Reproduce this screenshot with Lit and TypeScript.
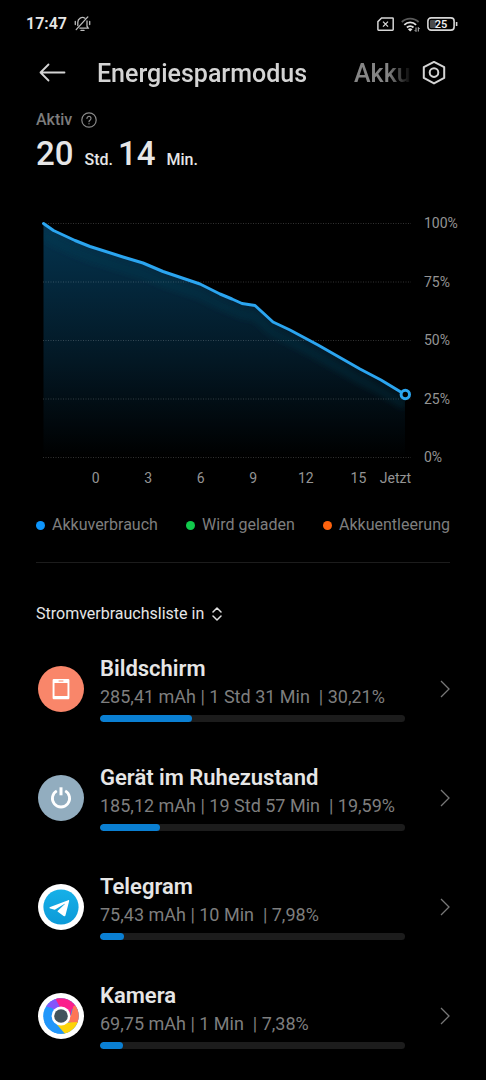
import { LitElement, html, css, svg, TemplateResult } from "lit";
import { customElement } from "lit/decorators.js";

interface Consumer {
  name: string;
  detail: string;
  percent: number;
  icon: TemplateResult;
}

const screenIcon = html`<svg class="app-icon" viewBox="0 0 46 46" aria-hidden="true">
  <circle cx="23" cy="23" r="23" fill="#f9866a" />
  <path
    fill="#fff"
    fill-rule="evenodd"
    d="M15.8 13h14.400a1.200 1.200 0 0 1 1.200 1.200v17.900a1.200 1.200 0 0 1-1.200 1.200H15.800a1.200 1.200 0 0 1-1.200-1.200V14.200a1.200 1.200 0 0 1 1.200-1.200zM16.500 17v13h13V17zM20.600 14.500v1h4.800v-1z"
  />
</svg>`;

const idleIcon = html`<svg class="app-icon" viewBox="0 0 46 46" aria-hidden="true">
  <circle cx="23" cy="23" r="23" fill="#92adbf" />
  <path d="M18.800 15.900a8.600 8.600 0 1 0 8.400 0" fill="none" stroke="#fff" stroke-width="2.800" />
  <path d="M23 12.300v8" stroke="#fff" stroke-width="3" />
</svg>`;

const telegramIcon = html`<svg class="app-icon" viewBox="0 0 46 46" aria-hidden="true">
  <defs>
    <linearGradient id="tg" x1="0" y1="0" x2="0" y2="1">
      <stop offset="0" stop-color="#16b0e8" />
      <stop offset="1" stop-color="#0c9ad8" />
    </linearGradient>
  </defs>
  <circle cx="23" cy="23" r="23" fill="#fff" />
  <circle cx="23" cy="23" r="17.6" fill="url(#tg)" />
  <path
    fill="#fff"
    d="M30.200 16.200 12.200 22.900c-1 .4-.9 1.200 0 1.500l4.600 1.400 9.400-5.900c.6-.3.9 0 .5.4l-6.900 6.400c-.4.4-.4.7 0 1l5.800 4.200c.9.6 1.700.300 1.900-.7l3.600-14c.2-.8-.2-1.300-.9-1z"
  />
</svg>`;

const cameraIcon = html`<svg class="app-icon" viewBox="0 0 46 46" aria-hidden="true">
  <defs>
    <clipPath id="lens"><circle cx="23" cy="23" r="17.800" /></clipPath>
  </defs>
  <circle cx="23" cy="23" r="23" fill="#fff" />
  <g clip-path="url(#lens)">
    <rect width="46" height="46" fill="#2196fa" />
    <path d="M23 23 14 15 6 13V0h14l6 14z" fill="#8455fb" />
    <path d="M23 16 17 5V0h29v12L34 16l-2 8z" fill="#fb1f8c" />
    <path d="M35.500 13 46 11v19l-12 0-6-2 5-6z" fill="#fd7657" />
    <path d="M42 29 30 29.500 17 30l9 13h12z" fill="#fdd408" />
    <path d="M15 27 28 42H14L4 30z" fill="#2196fa" />
  </g>
  <circle cx="23" cy="23" r="9.400" fill="#fff" />
  <circle cx="23" cy="23" r="6.800" fill="#42535c" />
</svg>`;

const consumers: Consumer[] = [
  { name: "Bildschirm", detail: "285,41 mAh | 1 Std 31 Min  | 30,21%", percent: 30.21, icon: screenIcon },
  { name: "Gerät im Ruhezustand", detail: "185,12 mAh | 19 Std 57 Min  | 19,59%", percent: 19.59, icon: idleIcon },
  { name: "Telegram", detail: "75,43 mAh | 10 Min  | 7,98%", percent: 7.98, icon: telegramIcon },
  { name: "Kamera", detail: "69,75 mAh | 1 Min  | 7,38%", percent: 7.38, icon: cameraIcon },
];

const curve =
  "0.500,0.500 10.500,7.500 32,17.500 47,23.500 80,34 100,40 120,48.500 157,61 177,71 189,76 199,80.500 212,82.500 230,99 247,107 275,122 317,146 338,157 357,168.500";

@customElement("power-chart")
export class PowerChart extends LitElement {
  static styles = css`
    :host {
      display: grid;
      grid-template-columns: minmax(0, 1fr) 34px;
      column-gap: 13px;
      row-gap: 13px;
      padding: 0 28px 0 43px;
      color: #949494;
      font-size: 14px;
      line-height: 16px;
    }
    .plot {
      display: block;
      width: 100%;
      overflow: visible;
    }
    .levels {
      display: flex;
      flex-direction: column;
      justify-content: space-between;
      margin: -8px 0;
    }
    .hours {
      display: grid;
      grid-template-columns: minmax(0, 1fr) repeat(6, minmax(0, 2fr)) minmax(0, 1fr);
      text-align: center;
    }
    .hours :first-child {
      grid-column: 2;
    }
    .now {
      justify-self: end;
    }
  `;

  render() {
    return html`
      <svg class="plot" viewBox="0 0 368 234" role="img" aria-label="Akkustand">
        <defs>
          <linearGradient id="area" x1="0" y1="0" x2="0" y2="234" gradientUnits="userSpaceOnUse">
            <stop offset="0" stop-color="#04344f" />
            <stop offset="0.25" stop-color="#04283d" />
            <stop offset="0.6" stop-color="#031723" />
            <stop offset="1" stop-color="#000" />
          </linearGradient>
          <clipPath id="under">
            <polygon points="${curve} 362,172 362,234 0.500,234" />
          </clipPath>
          <filter id="soft" x="-10%" y="-10%" width="120%" height="120%"><feGaussianBlur stdDeviation="3" /></filter>
        </defs>
        <polygon points="${curve} 362,172 362,234 0.500,234" fill="url(#area)" />
        <g clip-path="url(#under)">
          <polyline
            points="${curve} 362,172"
            transform="translate(0 11)"
            fill="none"
            stroke="#0a4458"
            stroke-opacity="0.28"
            stroke-width="8"
            filter="url(#soft)"
          />
        </g>
        ${[0.5, 59, 117.5, 176, 234.5].map(
          (y) => svg`<path d="M0 ${y}H368" stroke="#fff" stroke-opacity="0.2" stroke-dasharray="1 1.500" />`
        )}
        <polyline points="${curve}" fill="none" stroke="#2ba5f0" stroke-width="3" stroke-linejoin="round" stroke-linecap="round" />
        <circle cx="362.300" cy="171.500" r="4.200" fill="#000" stroke="#2ba5f0" stroke-width="3" />
      </svg>
      <div class="levels">
        ${["100%", "75%", "50%", "25%", "0%"].map((t) => html`<span>${t}</span>`)}
      </div>
      <div class="hours">
        ${["0", "3", "6", "9", "12", "15"].map((t) => html`<span>${t}</span>`)}
        <span class="now">Jetzt</span>
      </div>
    `;
  }
}

@customElement("app-root")
export class AppRoot extends LitElement {
  static styles = css`
    :host {
      display: block;
      min-height: 100vh;
      box-sizing: border-box;
      background: #000;
      color: #e6e6e6;
      font-family: Roboto, "Noto Sans", sans-serif;
      font-size: 16px;
      line-height: 20px;
    }
    button {
      padding: 0;
      border: 0;
      background: none;
      color: inherit;
      font: inherit;
      cursor: pointer;
    }
    svg {
      display: block;
      flex: none;
    }
    .status {
      display: flex;
      align-items: center;
      gap: 7px;
      height: 48px;
      padding: 0 28px 0 26px;
      font-weight: 600;
    }
    .spacer {
      flex: 1;
    }
    .header {
      display: flex;
      align-items: center;
      height: 50px;
      padding: 0 40px 0 38px;
      color: #d4d4d4;
    }
    .tabs {
      display: flex;
      flex: 1;
      min-width: 0;
      gap: 47px;
      margin: 0 10px 0 31px;
      padding-top: 2px;
      overflow: hidden;
      font-size: 25px;
      font-weight: 500;
      line-height: 32px;
      white-space: nowrap;
      -webkit-mask-image: linear-gradient(to left, transparent 0, #000 24px);
      mask-image: linear-gradient(to left, transparent 0, #000 24px);
    }
    .other {
      color: #858585;
    }
    .active {
      display: flex;
      align-items: center;
      gap: 9px;
      padding: 12px 36px 0;
      color: #7c7c7c;
      font-weight: 500;
    }
    .duration {
      display: flex;
      align-items: baseline;
      margin: 4px 36px 0;
      font-weight: 500;
    }
    .figure {
      font-size: 33px;
      line-height: 40px;
    }
    .unit {
      margin: 0 5px 0 11px;
    }
    power-chart {
      margin-top: 49px;
    }
    .legend {
      display: flex;
      justify-content: space-between;
      margin: 29px 36px 0;
      padding: 0 0 27px;
      border-bottom: 1px solid #1c1c1c;
      color: #7e7e7e;
      list-style: none;
    }
    .legend-item {
      display: flex;
      align-items: center;
      gap: 7px;
    }
    .dot {
      width: 9px;
      height: 9px;
      border-radius: 50%;
    }
    .blue {
      background: #0d95fc;
    }
    .green {
      background: #11ca4c;
    }
    .orange {
      background: #fd620e;
    }
    .sort {
      display: flex;
      align-items: center;
      gap: 8px;
      margin: 41px 36px 10px;
    }
    .list {
      margin: 0;
      padding: 0;
      list-style: none;
    }
    .row {
      display: flex;
      align-items: center;
      height: 109px;
      padding: 0 36px 0 38px;
      color: inherit;
      text-decoration: none;
    }
    .app-icon {
      width: 46px;
      height: 46px;
    }
    .info {
      display: flex;
      flex: 1;
      flex-direction: column;
      min-width: 0;
      margin: 0 35px 0 16px;
    }
    .name {
      font-size: 22px;
      font-weight: 600;
      line-height: 28px;
    }
    .detail {
      margin: 2px 0 6px;
      color: #7e7e7e;
      font-size: 18px;
      line-height: 24px;
      white-space: pre;
    }
    .bar {
      display: block;
      width: 100%;
      height: 7px;
      border: 0;
      border-radius: 4px;
      overflow: hidden;
      appearance: none;
      background: #1c1c1c;
    }
    .bar::-webkit-progress-bar {
      background: #1c1c1c;
    }
    .bar::-webkit-progress-value {
      border-radius: 4px;
      background: #0a7fd2;
    }
  `;

  render() {
    return html`
      <div class="status">
        <span>17:47</span>
        <svg width="17" height="16" viewBox="0 0 17 16" fill="none" stroke="#bdbdbd" stroke-width="1.300" stroke-linecap="round" aria-label="Stumm">
          <path d="M3.800 9.600V6.200A4.700 4.700 0 0 1 11 2.200M13 5v5.200l1.200 1.900H5.800M7 14.400h3" />
          <path d="M13.800.9 2.200 13.600M1.300 5.500v3M15.700 5.500v3" />
        </svg>
        <span class="spacer"></span>
        <svg width="17" height="14" viewBox="0 0 17 14" fill="none" stroke="#d6d6d6" stroke-width="1.500" aria-label="Keine SIM">
          <path d="M4.600.9H15.500a.7.700 0 0 1 .7.700V12.500a.7.700 0 0 1-.7.700H1.600a.7.700 0 0 1-.7-.7V4.600z" />
          <path d="m6 4.600 5 5m0-5-5 5" stroke-width="1.300" />
        </svg>
        <svg width="19" height="15" viewBox="0 0 19 15" fill="none" aria-label="WLAN">
          <path d="M.8 5a12 12 0 0 1 16.800 0" stroke="#5a5a5a" stroke-width="1.800" />
          <path d="M3.300 7.800a8.500 8.500 0 0 1 11.800 0M5.900 10.500a4.800 4.800 0 0 1 6.600 0" stroke="#e0e0e0" stroke-width="1.800" />
          <path d="M9.200 14.600 6.900 12.300a3.300 3.300 0 0 1 4.600 0z" fill="#e0e0e0" />
          <path d="M15 10.500v4M15 14.500l-1.300-1.300M17.300 14.500v-4M17.300 10.500l1.300 1.300" stroke="#bdbdbd" />
        </svg>
        <svg width="31" height="14" viewBox="0 0 31 14" aria-label="Akku 25 Prozent">
          <rect x=".9" y=".9" width="26.200" height="12.200" rx="3.200" fill="none" stroke="#d6d6d6" stroke-width="1.600" />
          <rect x="3" y="3" width="6" height="8" rx="1" fill="#4a4a4a" />
          <path d="M29.600 5v4" stroke="#d6d6d6" stroke-width="1.600" />
          <text x="14" y="11" text-anchor="middle" fill="#eee" font-size="11" font-weight="600">25</text>
        </svg>
      </div>

      <header class="header">
        <button aria-label="Zurück">
          <svg width="28" height="20" viewBox="0 0 28 20" fill="none" stroke="#d4d4d4" stroke-width="1.800" stroke-linecap="round" stroke-linejoin="round">
            <path d="M10.500 1.500 2.500 9.500l8 8M2.500 9.500H26.500" />
          </svg>
        </button>
        <nav class="tabs">
          <button>Energiesparmodus</button>
          <button class="other">Akku</button>
        </nav>
        <button aria-label="Einstellungen">
          <svg width="24" height="24" viewBox="0 0 24 24" fill="none" stroke="#d4d4d4" stroke-width="2" stroke-linejoin="round">
            <path d="M12 .9 22.200 6.200v10.700L12 22.400 1.800 16.900v-10.700z" />
            <circle cx="12" cy="11.600" r="4.300" />
          </svg>
        </button>
      </header>

      <main>
        <div class="active">
          <span>Aktiv</span>
          <button aria-label="Hilfe">
            <svg width="16" height="16" viewBox="0 0 16 16" fill="none" stroke="#8a8a8a" stroke-width="1.200" stroke-linecap="round">
              <circle cx="8" cy="8" r="7.200" />
              <path d="M6 6.400a2 2 0 1 1 3.200 1.500C8.300 8.500 8 8.800 8 9.700M8 11.700v.1" />
            </svg>
          </button>
        </div>
        <div class="duration">
          <span class="figure">20</span><span class="unit">Std.</span>
          <span class="figure">14</span><span class="unit">Min.</span>
        </div>

        <power-chart></power-chart>

        <ul class="legend">
          <li class="legend-item"><span class="dot blue"></span>Akkuverbrauch</li>
          <li class="legend-item"><span class="dot green"></span>Wird geladen</li>
          <li class="legend-item"><span class="dot orange"></span>Akkuentleerung</li>
        </ul>

        <button class="sort">
          Stromverbrauchsliste in
          <svg width="10" height="14" viewBox="0 0 10 14" fill="none" stroke="#e0e0e0" stroke-width="1.500" stroke-linecap="round" stroke-linejoin="round">
            <path d="M1 5 5 1l4 4M1 9l4 4 4-4" />
          </svg>
        </button>

        <ul class="list">
          ${consumers.map(
            (c) => html`<li>
              <a class="row" href="#">
                ${c.icon}
                <span class="info">
                  <span class="name">${c.name}</span>
                  <span class="detail">${c.detail}</span>
                  <progress class="bar" max="100" .value=${c.percent} aria-label=${c.name}></progress>
                </span>
                <svg width="10" height="18" viewBox="0 0 10 18" fill="none" stroke="#777" stroke-width="1.300">
                  <path d="m1 1 8 8-8 8" />
                </svg>
              </a>
            </li>`
          )}
        </ul>
      </main>
    `;
  }
}
